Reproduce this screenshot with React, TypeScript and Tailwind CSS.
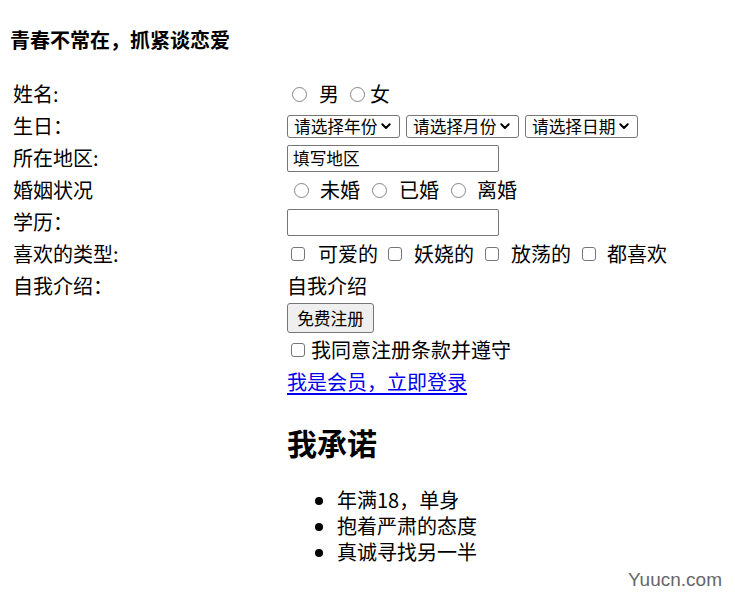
import React from "react";

const Radio = ({ className = "" }: { className?: string }) => (
  <span className={"inline-block w-[15px] h-[15px] rounded-full border border-[#858585] bg-white shrink-0 " + className} />
);

const Check = ({ className = "" }: { className?: string }) => (
  <span className={"inline-block w-[14px] h-[14px] rounded-[3px] border border-[#767676] bg-white shrink-0 " + className} />
);

const Chevron = () => (
  <svg width="10" height="7" viewBox="0 0 10 7" className="shrink-0">
    <path d="M1.3 1.3 L5 5 L8.7 1.3" fill="none" stroke="#000" strokeWidth="2" strokeLinecap="round" strokeLinejoin="round" />
  </svg>
);

const Select = ({ label }: { label: string }) => (
  <div className="h-[23px] w-[113px] border border-[#767676] rounded-[3px] bg-white flex items-center pl-[6px] pr-[8px] text-[16.7px] leading-[20px] justify-between">
    <span>{label}</span>
    <Chevron />
  </div>
);

const Row = ({ label, children }: { label: string; children?: React.ReactNode }) => (
  <>
    <div className="h-[32px] flex items-center">{label}</div>
    <div className="h-[32px] flex items-center">{children}</div>
  </>
);

export default function App() {
  return (
    <div className="w-[735px] h-[611px] bg-white relative text-black text-[20px] leading-[26px] font-['Noto_Sans_CJK_SC','Noto_Sans',sans-serif] overflow-hidden">
      <div className="pl-[10px] pt-[28px] font-bold text-[20px] leading-[24px]">青春不常在，抓紧谈恋爱</div>
      <div className="mt-[26px] pl-[13px] grid grid-cols-[275px_1fr]">
        <Row label="姓名:">
          <Radio className="ml-[4px]" />
          <span className="ml-[12px]">男</span>
          <Radio className="ml-[11px]" />
          <span className="ml-[5px]">女</span>
        </Row>
        <Row label="生日：">
          <div className="flex gap-[6px] -ml-[1px]">
            <Select label="请选择年份" />
            <Select label="请选择月份" />
            <Select label="请选择日期" />
          </div>
        </Row>
        <Row label="所在地区:">
          <div className="-ml-[1px] w-[212px] h-[27px] border border-[#767676] rounded-[2px] flex items-center pl-[5px] text-[16.7px] leading-[20px]">填写地区</div>
        </Row>
        <Row label="婚姻状况">
          <Radio className="ml-[6px]" />
          <span className="ml-[11px]">未婚</span>
          <Radio className="ml-[12px]" />
          <span className="ml-[12px]">已婚</span>
          <Radio className="ml-[12px]" />
          <span className="ml-[11px]">离婚</span>
        </Row>
        <Row label="学历：">
          <div className="-ml-[1px] w-[212px] h-[27px] border border-[#767676] rounded-[2px]" />
        </Row>
        <Row label="喜欢的类型:">
          <Check className="ml-[3px]" />
          <span className="ml-[13px]">可爱的</span>
          <Check className="ml-[10px]" />
          <span className="ml-[12px]">妖娆的</span>
          <Check className="ml-[11px]" />
          <span className="ml-[12px]">放荡的</span>
          <Check className="ml-[11px]" />
          <span className="ml-[11px]">都喜欢</span>
        </Row>
        <Row label="自我介绍：">
          <span className="-ml-[1px]">自我介绍</span>
        </Row>
        <Row label="">
          <div className="-ml-[1px] w-[87px] h-[30px] border border-[#767676] rounded-[3px] bg-[#efefef] flex items-center justify-center text-[16.7px] leading-[20px]">免费注册</div>
        </Row>
        <Row label="">
          <Check className="ml-[3px]" />
          <span className="ml-[6px]">我同意注册条款并遵守</span>
        </Row>
        <Row label="">
          <a href="#" className="-ml-[1px] text-[#0000ee] underline underline-offset-[3px]">我是会员，立即登录</a>
        </Row>
        <div />
        <div>
          <h2 className="-ml-[1px] mt-[26px] text-[30px] leading-[36px] font-bold">我承诺</h2>
          <ul className="mt-[27px] pl-[49px] list-disc leading-[26px]">
            <li>年满18，单身</li>
            <li>抱着严肃的态度</li>
            <li>真诚寻找另一半</li>
          </ul>
        </div>
      </div>
      <div className="absolute right-[13px] top-[568px] text-[19px] leading-[24px] text-[#666] font-['Liberation_Sans',sans-serif]">Yuucn.com</div>
    </div>
  );
}
